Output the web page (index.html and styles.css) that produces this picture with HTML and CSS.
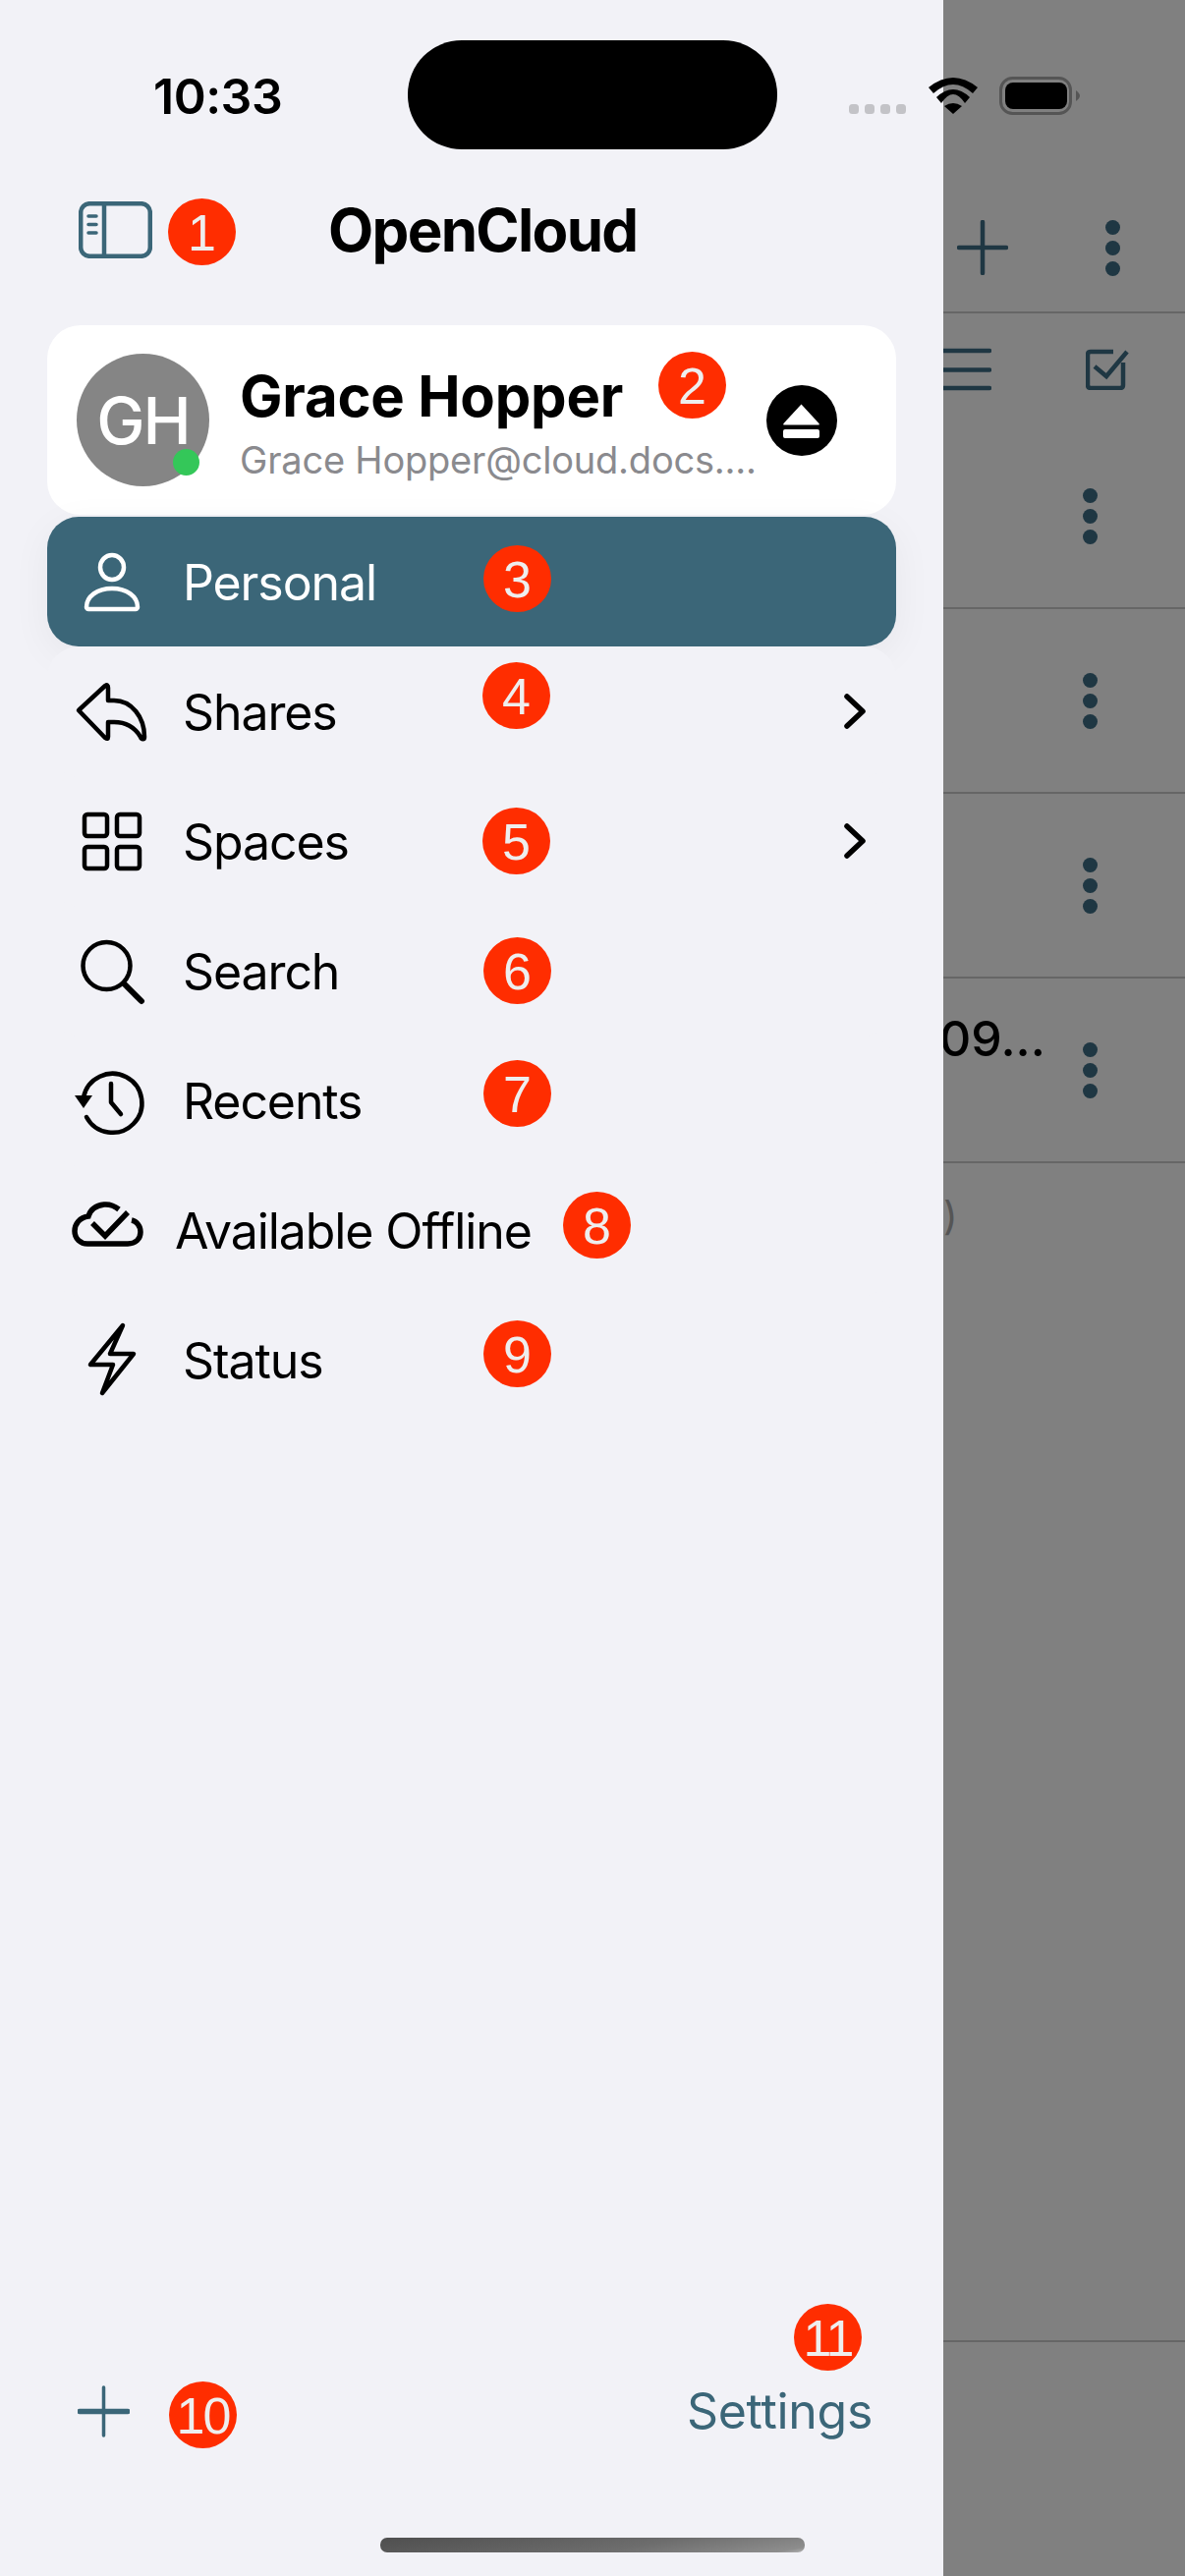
FILE: index.html
```html
<!DOCTYPE html>
<html lang="en">
<head>
  <meta charset="UTF-8">
  <meta name="viewport" content="width=device-width, initial-scale=1.0">
  <title>OpenCloud</title>
  <link rel="stylesheet" href="styles.css">
</head>
<body>
  <div class="screen">
    <aside class="sidebar">
      <header class="side-head">
        <svg class="side-toggle" width="75" height="58" viewBox="0 0 75 58">
          <rect x="2.2" y="2.2" width="70.6" height="53.6" rx="9"/>
          <path d="M26 2V56"/>
          <path class="thin" d="M10 15H18M10 23.5H18M10 32H18"/>
        </svg>
        <h1 class="side-title">OpenCloud</h1>
      </header>

      <section class="account">
        <div class="avatar">GH<span class="presence"></span></div>
        <div class="account-text">
          <div class="account-name">Grace Hopper</div>
          <div class="account-mail">Grace Hopper@cloud.docs....</div>
        </div>
        <svg class="eject" width="72" height="72" viewBox="0 0 72 72">
          <circle cx="36" cy="36" r="36"/>
          <path class="eject-mark" d="M35.5 19.5 L53.5 39 Q54.5 40.5 53 40.5 H18 Q16.500 40.500 17.500 39Z"/>
          <rect class="eject-mark" x="17" y="45" width="37" height="9" rx="2"/>
        </svg>
      </section>

      <nav class="nav">
        <a class="nav-row selected">
          <svg class="nav-icon" width="80" height="80" viewBox="0 0 80 80">
            <ellipse cx="42" cy="25.500" rx="12" ry="12.500"/>
            <path d="M16 66c0-11 11-19 26-19s26 8 26 19c0 1-1 2-2 2H18c-1 0-2-1-2-2z"/>
          </svg>
          <span>Personal</span>
        </a>
        <a class="nav-row">
          <svg class="nav-icon" width="80" height="80" viewBox="0 0 80 80">
            <path d="M8 39 L35 14 Q38 12 38 16 V29 H44 C62 29 75 46 75 66 C75 69 72 69 71 66 C65 56 56 51 44 51 H38 V66 Q38 69 35 67 Z"/>
          </svg>
          <span>Shares</span>
          <svg class="chevron" width="22" height="36" viewBox="0 0 22 36"><path d="M3 3 L19 18 L3 33"/></svg>
        </a>
        <a class="nav-row">
          <svg class="nav-icon" width="80" height="80" viewBox="0 0 80 80">
            <rect x="14" y="13" width="23" height="22" rx="3"/>
            <rect x="47" y="13" width="23" height="22" rx="3"/>
            <rect x="14" y="46" width="23" height="22" rx="3"/>
            <rect x="47" y="46" width="23" height="22" rx="3"/>
          </svg>
          <span>Spaces</span>
          <svg class="chevron" width="22" height="36" viewBox="0 0 22 36"><path d="M3 3 L19 18 L3 33"/></svg>
        </a>
        <a class="nav-row">
          <svg class="nav-icon" width="80" height="80" viewBox="0 0 80 80">
            <circle cx="36.500" cy="35" r="24"/>
            <path class="handle" d="M54 53 L72 71"/>
          </svg>
          <span>Search</span>
        </a>
        <a class="nav-row">
          <svg class="nav-icon" width="80" height="80" viewBox="0 0 80 80">
            <path d="M16 57 A30 30 0 1 0 13 37"/>
            <path class="solid" d="M4 35 H22 L13 48Z"/>
            <path d="M41 23 V42 L51 54"/>
          </svg>
          <span>Recents</span>
        </a>
        <a class="nav-row offline">
          <svg class="nav-icon" width="80" height="80" viewBox="0 0 80 80">
            <path class="heavy" d="M49 19 C44 15 39 13.500 34 14 C26 15 20 19 18 26 C9 27 4 34 4 41 C4 49 10 54 17 54 H58 C66 54 71 49 71 42 C71 36 67 31 62 30"/>
            <path class="heavy" d="M22 33 L35 46 L58 22"/>
          </svg>
          <span>Available Offline</span>
        </a>
        <a class="nav-row">
          <svg class="nav-icon" width="80" height="80" viewBox="0 0 80 80">
            <path d="M53 5 L20 45 H43 L32 74 L64 34 H40Z"/>
          </svg>
          <span>Status</span>
        </a>
      </nav>

      <footer class="side-foot">
        <svg class="add" width="53" height="53" viewBox="0 0 53 53"><path class="add-v" d="M26.500 2V51"/><path d="M2 26.500H51"/></svg>
        <span class="settings">Settings</span>
      </footer>
      <div class="home-bar"></div>
    </aside>

    <main class="behind">
      <div class="behind-head">
        <svg class="tool" width="52" height="56" viewBox="0 0 52 56"><path d="M26 2V54M2 28H50"/></svg>
        <svg class="dots" width="15" height="57" viewBox="0 0 15 57"><circle cx="7.500" cy="7.500" r="7.500"/><circle cx="7.500" cy="28.500" r="7.500"/><circle cx="7.500" cy="49.500" r="7.500"/></svg>
      </div>
      <div class="behind-tools">
        <svg class="tool" width="49" height="44" viewBox="0 0 49 44"><path d="M0 3H47M0 22.500H47M0 41H47"/></svg>
        <svg class="tool tool-check" width="44" height="42" viewBox="0 0 44 42"><path d="M28 3H5Q2 3 2 6V37Q2 40 5 40H35Q38 40 38 37V14"/><path d="M9 18L21 28L42 3"/></svg>
      </div>
      <div class="file-row"><svg class="dots" width="15" height="57" viewBox="0 0 15 57"><circle cx="7.500" cy="7.500" r="7.500"/><circle cx="7.500" cy="28.500" r="7.500"/><circle cx="7.500" cy="49.500" r="7.500"/></svg></div>
      <div class="file-row"><svg class="dots" width="15" height="57" viewBox="0 0 15 57"><circle cx="7.500" cy="7.500" r="7.500"/><circle cx="7.500" cy="28.500" r="7.500"/><circle cx="7.500" cy="49.500" r="7.500"/></svg></div>
      <div class="file-row"><svg class="dots" width="15" height="57" viewBox="0 0 15 57"><circle cx="7.500" cy="7.500" r="7.500"/><circle cx="7.500" cy="28.500" r="7.500"/><circle cx="7.500" cy="49.500" r="7.500"/></svg></div>
      <div class="file-row"><span class="file-name">09...</span><svg class="dots" width="15" height="57" viewBox="0 0 15 57"><circle cx="7.500" cy="7.500" r="7.500"/><circle cx="7.500" cy="28.500" r="7.500"/><circle cx="7.500" cy="49.500" r="7.500"/></svg></div>
      <div class="file-count">)</div>
    </main>

    <!-- status bar sits over both panes -->
    <div class="status-bar">
      <span class="clock">10:33</span>
      <div class="island"></div>
      <div class="cell"><i></i><i></i><i></i><i></i></div>
      <svg class="wifi" width="50" height="37" viewBox="0 0 50 37">
        <path d="M0 10 Q25 -10 50 10 L45 16 Q25 -2 5 16Z"/>
        <path d="M8 20 Q25 4 42 20 L37 26 Q25 8 13 26Z"/>
        <path d="M25 37 L16 29 Q25 23 34 29Z"/>
      </svg>
      <svg class="battery" width="82" height="39" viewBox="0 0 82 39">
        <rect class="battery-case" x="1.500" y="1.500" width="71" height="36" rx="12"/>
        <rect x="6" y="6" width="63" height="27" rx="8"/>
        <path class="battery-nub" d="M78 14 Q82 17 82 19.500 Q82 22 78 25Z"/>
      </svg>
    </div>

    <!-- numbered callouts -->
    <span class="mark mark-1">1</span>
    <span class="mark mark-2">2</span>
    <span class="mark mark-3">3</span>
    <span class="mark mark-4">4</span>
    <span class="mark mark-5">5</span>
    <span class="mark mark-6">6</span>
    <span class="mark mark-7">7</span>
    <span class="mark mark-8">8</span>
    <span class="mark mark-9">9</span>
    <span class="mark mark-10">10</span>
    <span class="mark mark-11">11</span>
  </div>
</body>
</html>
```

FILE: styles.css
```css
body {
  margin: 0;
  font-family: 'Inter', 'Liberation Sans', sans-serif;
  background-color: #808080;
}

svg {
  display: block;
  flex-shrink: 0;
}

.screen {
  position: relative;
  display: flex;
  width: 1206px;
  height: 2622px;
  overflow: hidden;
}

/* left drawer */
.sidebar {
  display: flex;
  flex-direction: column;
  width: 960px;
  height: 2622px;
  background-color: #f2f2f7;
  overflow: hidden;
}

.side-head {
  display: flex;
  align-items: flex-start;
  box-sizing: border-box;
  height: 331px;
  padding: 205px 0 0 80px;
}

.side-toggle {
  fill: none;
  stroke: #3b6678;
  stroke-width: 4.5;
}

.side-toggle .thin {
  stroke-width: 3.5;
  stroke-linecap: round;
}

.side-title {
  margin: 0 0 0 179px;
  font-size: 60px;
  line-height: 58px;
  font-weight: 700;
  color: #000;
  letter-spacing: -1.7px;
}

.account {
  display: flex;
  align-items: center;
  box-sizing: border-box;
  width: 864px;
  height: 193px;
  margin: 0 48px 2px;
  padding: 0 60px 0 30px;
  background-color: #fff;
  border-radius: 34px;
}

.avatar {
  position: relative;
  display: flex;
  align-items: center;
  justify-content: center;
  width: 135px;
  height: 135px;
  border-radius: 50%;
  background-color: #858585;
  color: #fff;
  font-size: 66px;
  font-weight: 500;
  letter-spacing: -2px;
}

.presence {
  position: absolute;
  left: 98px;
  top: 97px;
  width: 27px;
  height: 27px;
  border-radius: 50%;
  background-color: #34c759;
}

.account-text {
  flex: 1;
  min-width: 0;
  margin-left: 31px;
  padding-top: 6px;
  white-space: nowrap;
}

.account-name {
  font-size: 58px;
  line-height: 68px;
  font-weight: 700;
  color: #000;
  letter-spacing: -0.2px;
}

.account-mail {
  margin-top: 7px;
  font-size: 38px;
  line-height: 48px;
  color: #8a8a8e;
  letter-spacing: -0.2px;
}

.eject-mark {
  fill: #fff;
}

.nav {
  display: flex;
  flex-direction: column;
  margin: 0 48px;
}

.nav-row {
  position: relative;
  display: flex;
  align-items: center;
  box-sizing: border-box;
  height: 132px;
  padding: 0 31px 0 24px;
  background-color: #f2f2f7;
  border-radius: 32px;
  color: #000;
  font-size: 50px;
  letter-spacing: -1.1px;
}

.nav-row span {
  flex: 1;
  margin-left: 34px;
  padding-top: 2px;
}

.nav-row.selected {
  background-color: #3b6678;
  color: #fff;
  box-shadow: 0 10px 40px rgba(0, 0, 0, 0.05);
}

.nav-row.offline span {
  margin-left: 26px;
}

.nav-icon {
  fill: none;
  stroke: #000;
  stroke-width: 4.5;
  stroke-linejoin: round;
  stroke-linecap: round;
}

.selected .nav-icon {
  stroke: #fff;
}

.nav-icon .solid {
  fill: #000;
  stroke: none;
}

.nav-icon .handle {
  stroke-width: 6;
}

.nav-icon .heavy {
  stroke-width: 5.500;
  stroke-linecap: butt;
  stroke-linejoin: miter;
}

.chevron {
  fill: none;
  stroke: #000;
  stroke-width: 5.500;
  stroke-linecap: round;
  stroke-linejoin: round;
}

.side-foot {
  display: flex;
  align-items: center;
  justify-content: space-between;
  height: 60px;
  margin-top: auto;
  padding: 0 72px 0 79px;
  color: #3b6678;
  font-size: 50px;
  letter-spacing: -0.3px;
}

.add {
  fill: none;
  stroke: #3b6678;
  stroke-width: 5.500;
  stroke-linecap: round;
}

.add .add-v {
  stroke-width: 3.500;
}

.home-bar {
  width: 432px;
  height: 15px;
  margin: 99px 0 24px 387px;
  border-radius: 7px;
  background: linear-gradient(170deg, #4f4f4f 0%, #6d6d6d 60%, #8d8d8d 94%, #b5b5b5 100%);
}

/* dimmed page behind the drawer */
.behind {
  flex: 1;
  overflow: hidden;
  background-color: #808080;
}

.behind-head {
  display: flex;
  justify-content: flex-end;
  gap: 99px;
  box-sizing: border-box;
  height: 319px;
  padding: 224px 66px 0 14px;
  border-bottom: 2px solid #666;
}

.tool {
  fill: none;
  stroke: #1f3743;
  stroke-width: 4.500;
  stroke-linecap: round;
}

.dots {
  fill: #1f3743;
}

.behind-tools {
  display: flex;
  align-items: center;
  justify-content: space-between;
  height: 113px;
  padding-right: 57px;
}

.tool-check {
  stroke-linecap: butt;
}

.file-row {
  display: flex;
  align-items: center;
  justify-content: flex-end;
  box-sizing: border-box;
  height: 188px;
  padding-right: 89px;
  border-bottom: 2px solid #666;
}

.file-name {
  flex: 1;
  align-self: flex-start;
  margin: 31px 0 0 -4px;
  font-size: 50px;
  line-height: 60px;
  font-weight: 500;
  color: #000;
}

.file-count {
  box-sizing: border-box;
  height: 1200px;
  padding-top: 30px;
  border-bottom: 2px solid #666;
  color: #555;
  font-size: 40px;
  line-height: 48px;
}

/* status bar */
.status-bar {
  position: absolute;
  top: 0;
  left: 0;
  display: flex;
  align-items: flex-start;
  width: 1206px;
}

.clock {
  width: 259px;
  margin: 68px 0 0 156px;
  font-size: 50px;
  line-height: 60px;
  font-weight: 600;
  color: #000;
  letter-spacing: -0.5px;
}

.island {
  width: 376px;
  height: 111px;
  margin-top: 41px;
  border-radius: 55px;
  background-color: #000;
}

.cell {
  display: flex;
  gap: 6px;
  margin: 106px 0 0 73px;
}

.cell i {
  width: 10px;
  height: 10px;
  border-radius: 3.500px;
  background-color: #c3c3c7;
}

.wifi {
  margin: 79px 0 0 23px;
}

.battery {
  margin: 78px 0 0 22px;
}

.battery-case {
  fill: none;
  stroke: #555;
  stroke-width: 3;
}

.battery-nub {
  fill: #555;
}

/* numbered callouts */
.mark {
  position: absolute;
  display: flex;
  align-items: center;
  justify-content: center;
  box-sizing: border-box;
  width: 69px;
  height: 68px;
  padding-top: 2px;
  border-radius: 50%;
  background-color: #ff2d00;
  color: #eee;
  font-family: 'Liberation Sans', sans-serif;
  font-size: 52px;
}

.mark-1 { left: 171px; top: 202px; }
.mark-2 { left: 670px; top: 358px; }
.mark-3 { left: 492px; top: 555px; }
.mark-4 { left: 491px; top: 674px; }
.mark-5 { left: 491px; top: 822px; }
.mark-6 { left: 492px; top: 954px; }
.mark-7 { left: 492px; top: 1079px; }
.mark-8 { left: 573px; top: 1213px; }
.mark-9 { left: 492px; top: 1344px; }
.mark-10 { left: 172px; top: 2424px; letter-spacing: -2px; }
.mark-11 { left: 808px; top: 2345px; letter-spacing: -2px; }
```
